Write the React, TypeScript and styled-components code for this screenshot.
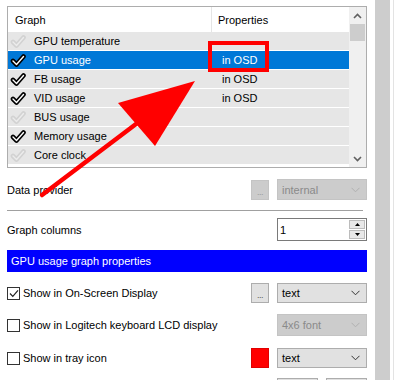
import React from "react";
import styled, { createGlobalStyle } from "styled-components";

const GlobalStyle = createGlobalStyle`
  html, body {
    margin: 0;
    padding: 0;
    background: #ffffff;
  }
  body {
    font-family: "Liberation Sans", Arial, sans-serif;
    font-size: 11px;
    color: #000;
  }
`;

const Window = styled.div`
  position: relative;
  display: flex;
  width: 398px;
  height: 380px;
  overflow: hidden;
  background: #fff;
`;

const Main = styled.div`
  display: flex;
  flex-direction: column;
  width: 360px;
  padding: 6px 0 0 7px;

  & > * {
    flex-shrink: 0;
  }
`;

const OuterScroll = styled.div`
  width: 15px;
  margin-left: 8px;
  background: #cdcdcd;
`;

const OuterEdge = styled.div`
  width: 1px;
  margin-left: 3px;
  background: #e3e3e3;
`;

const ListView = styled.div`
  display: flex;
  height: 160px;
  border: 1px solid #adadad;
  background: #fff;
`;

const Table = styled.div`
  flex: 1;
  display: flex;
  flex-direction: column;
`;

const HeaderRow = styled.div`
  display: flex;
  height: 25px;
  align-items: stretch;
`;

const HeaderCell = styled.div<{ $w?: number; $pad: number }>`
  display: flex;
  align-items: center;
  width: ${(p) => (p.$w ? `${p.$w}px` : "auto")};
  flex: ${(p) => (p.$w ? "none" : 1)};
  padding-left: ${(p) => p.$pad}px;
  box-sizing: border-box;
  border-right: ${(p) => (p.$w ? "1px solid #e5e5e5" : "none")};
  color: #000;
`;

const Row = styled.div<{ $selected?: boolean }>`
  display: flex;
  height: 18px;
  border-bottom: 1px solid #fff;
  align-items: center;
  background: ${(p) => (p.$selected ? "#0078d7" : "#e6e6e6")};
  color: ${(p) => (p.$selected ? "#fff" : "#000")};
`;

const NameCell = styled.div`
  display: flex;
  align-items: center;
  gap: 8px;
  width: 204px;
  padding-left: 2px;
  box-sizing: border-box;
`;

const PropCell = styled.div`
  flex: 1;
  padding-left: 10px;
`;

const ScrollBar = styled.div`
  display: flex;
  flex-direction: column;
  align-items: center;
  width: 17px;
  background: #f0f0f0;
`;

const ScrollArrow = styled.div`
  display: flex;
  align-items: center;
  justify-content: center;
  height: 17px;
  width: 17px;
`;

const Thumb = styled.div`
  width: 15px;
  height: 17px;
  background: #cdcdcd;
`;

const Spacer = styled.div`
  flex: 1;
`;

const FormRow = styled.div<{ $mt: number; $h: number }>`
  display: flex;
  align-items: center;
  margin-top: ${(p) => p.$mt}px;
  height: ${(p) => p.$h}px;
`;

const Label = styled.div`
  flex: 1;
  white-space: nowrap;
`;

const DotsButton = styled.div<{ $disabled?: boolean }>`
  display: flex;
  align-items: center;
  justify-content: center;
  width: 18px;
  height: 20px;
  box-sizing: border-box;
  margin-right: 8px;
  border: 1px solid ${(p) => (p.$disabled ? "#c4c4c4" : "#adadad")};
  background: ${(p) => (p.$disabled ? "#cccccc" : "#e1e1e1")};
  color: ${(p) => (p.$disabled ? "#9a9a9a" : "#555")};
  font-size: 9px;
  letter-spacing: -0.5px;
  padding-top: 4px;
`;

const Combo = styled.div<{ $disabled?: boolean; $h: number }>`
  display: flex;
  align-items: center;
  width: 90px;
  height: ${(p) => p.$h}px;
  box-sizing: border-box;
  padding: 0 6px 0 4px;
  border: 1px solid ${(p) => (p.$disabled ? "#c4c4c4" : "#adadad")};
  background: ${(p) => (p.$disabled ? "#cccccc" : "#e1e1e1")};
  color: ${(p) => (p.$disabled ? "#8a8a8a" : "#000")};
`;

const ComboText = styled.span`
  flex: 1;
`;

const Spinner = styled.div`
  display: flex;
  width: 90px;
  height: 23px;
  box-sizing: border-box;
  border: 1px solid #7a7a7a;
  background: #fff;
`;

const SpinValue = styled.div`
  flex: 1;
  display: flex;
  align-items: center;
  padding-left: 2px;
`;

const SpinButtons = styled.div`
  display: flex;
  flex-direction: column;
  gap: 1px;
  width: 16px;
  padding: 1px 1px 1px 0;
`;

const SpinButton = styled.div`
  flex: 1;
  display: flex;
  align-items: center;
  justify-content: center;
  background: #e8e8e8;
  border: 1px solid #bcbcbc;
`;

const Separator = styled.div`
  height: 1px;
  width: 356px;
  margin-top: 10px;
  background: #a0a0a0;
`;

const SectionBar = styled.div`
  display: flex;
  align-items: center;
  height: 22px;
  margin-top: 9px;
  padding-left: 4px;
  background: #0000ff;
  color: #fff;
`;

const CheckBox = styled.div`
  display: flex;
  align-items: center;
  justify-content: center;
  width: 13px;
  height: 13px;
  box-sizing: border-box;
  margin-right: 3px;
  border: 1px solid #333;
  background: #fff;
`;

const ColorSwatch = styled.div`
  width: 18px;
  height: 20px;
  margin-right: 8px;
  background: #ff0000;
  box-sizing: border-box;
  border: 1px solid #e00000;
`;

const BottomButtons = styled.div`
  display: flex;
  justify-content: flex-end;
  gap: 8px;
  margin-top: 10px;
`;

const BottomButton = styled.div`
  width: 41px;
  height: 22px;
  box-sizing: border-box;
  border: 1px solid #adadad;
  background: #e1e1e1;
`;

const Overlay = styled.svg`
  position: absolute;
  left: 0;
  top: 0;
  pointer-events: none;
`;

function ListCheck({ on }: { on: boolean }) {
  const d = "M3 8 L6.5 11.5 L13.5 3.5";
  return (
    <svg width="16" height="15" viewBox="0 0 16 15">
      <path d={d} fill="none" stroke={on ? "#000" : "#d2d2d2"} strokeWidth="4.6" strokeLinecap="round" strokeLinejoin="round" />
      <path d={d} fill="none" stroke={on ? "#fff" : "#ececec"} strokeWidth="1.4" strokeLinecap="round" strokeLinejoin="round" />
    </svg>
  );
}

function Chevron({ color }: { color: string }) {
  return (
    <svg width="9" height="6" viewBox="0 0 9 6">
      <path d="M0.5 0.8 L4.5 4.8 L8.5 0.8" fill="none" stroke={color} strokeWidth="1" />
    </svg>
  );
}

const graphs = [
  { name: "GPU temperature", on: false, prop: "" },
  { name: "GPU usage", on: true, prop: "in OSD", selected: true },
  { name: "FB usage", on: true, prop: "in OSD" },
  { name: "VID usage", on: true, prop: "in OSD" },
  { name: "BUS usage", on: false, prop: "" },
  { name: "Memory usage", on: true, prop: "" },
  { name: "Core clock", on: false, prop: "" },
];

export default function App() {
  return (
    <Window>
      <GlobalStyle />
      <Main>
        <ListView>
          <Table>
            <HeaderRow>
              <HeaderCell $w={204} $pad={7}>Graph</HeaderCell>
              <HeaderCell $pad={6}>Properties</HeaderCell>
            </HeaderRow>
            {graphs.map((g) => (
              <Row key={g.name} $selected={g.selected}>
                <NameCell>
                  <ListCheck on={g.on} />
                  {g.name}
                </NameCell>
                <PropCell>{g.prop}</PropCell>
              </Row>
            ))}
          </Table>
          <ScrollBar>
            <ScrollArrow>
              <svg width="9" height="6" viewBox="0 0 9 6">
                <path d="M1 5 L4.5 1.5 L8 5" fill="none" stroke="#606060" strokeWidth="1.6" />
              </svg>
            </ScrollArrow>
            <Thumb />
            <Spacer />
            <ScrollArrow>
              <svg width="9" height="6" viewBox="0 0 9 6">
                <path d="M1 1 L4.5 4.5 L8 1" fill="none" stroke="#606060" strokeWidth="1.6" />
              </svg>
            </ScrollArrow>
          </ScrollBar>
        </ListView>

        <FormRow $mt={11} $h={21}>
          <Label>Data provider</Label>
          <DotsButton $disabled>...</DotsButton>
          <Combo $disabled $h={21}>
            <ComboText>internal</ComboText>
            <Chevron color="#b0b0b0" />
          </Combo>
        </FormRow>

        <Separator />

        <FormRow $mt={7} $h={23}>
          <Label>Graph columns</Label>
          <Spinner>
            <SpinValue>1</SpinValue>
            <SpinButtons>
              <SpinButton>
                <svg width="5" height="3" viewBox="0 0 5 3"><path d="M0 3 L2.5 0 L5 3 Z" fill="#000" /></svg>
              </SpinButton>
              <SpinButton>
                <svg width="5" height="3" viewBox="0 0 5 3"><path d="M0 0 L2.5 3 L5 0 Z" fill="#000" /></svg>
              </SpinButton>
            </SpinButtons>
          </Spinner>
        </FormRow>

        <SectionBar>GPU usage graph properties</SectionBar>

        <FormRow $mt={11} $h={20}>
          <CheckBox>
            <svg width="10" height="9" viewBox="0 0 10 9">
              <path d="M1 4.5 L3.8 7.3 L9 1.3" fill="none" stroke="#222" strokeWidth="1.2" />
            </svg>
          </CheckBox>
          <Label>Show in On-Screen Display</Label>
          <DotsButton>...</DotsButton>
          <Combo $h={20}>
            <ComboText>text</ComboText>
            <Chevron color="#333" />
          </Combo>
        </FormRow>

        <FormRow $mt={11} $h={22}>
          <CheckBox />
          <Label>Show in Logitech keyboard LCD display</Label>
          <Combo $disabled $h={22}>
            <ComboText>4x6 font</ComboText>
            <Chevron color="#b0b0b0" />
          </Combo>
        </FormRow>

        <FormRow $mt={12} $h={20}>
          <CheckBox />
          <Label>Show in tray icon</Label>
          <ColorSwatch />
          <Combo $h={20}>
            <ComboText>text</ComboText>
            <Chevron color="#333" />
          </Combo>
        </FormRow>

        <BottomButtons>
          <BottomButton />
          <BottomButton />
        </BottomButtons>
      </Main>
      <OuterScroll />
      <OuterEdge />

      <Overlay width="398" height="380" viewBox="0 0 398 380">
        <rect x="210" y="43" width="57" height="27" fill="none" stroke="#ff0000" strokeWidth="4" />
        <line x1="42" y1="195" x2="140" y2="121" stroke="#ff0000" strokeWidth="4.5" strokeLinecap="round" />
        <polygon points="195,81 118,103 155,146" fill="#ff0000" />
      </Overlay>
    </Window>
  );
}
